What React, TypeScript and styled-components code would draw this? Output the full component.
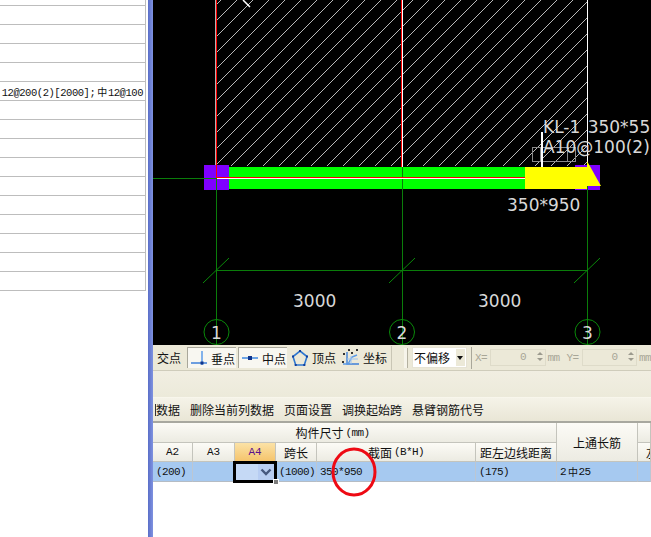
import React from "react";
import styled, { createGlobalStyle } from "styled-components";

const CJK = `"Noto Sans CJK SC", "Liberation Sans", sans-serif`;
const MONO = `"Liberation Mono", "Noto Sans CJK SC", monospace`;

const hatchLines = Array.from({ length: 40 }, (_, i) => 253 + (i - 2) * 16);

export default function App() {
  return (
    <Page>
      <GlobalStyle />
      <LeftPanel>
        {Array.from({ length: 16 }, (_, i) => (
          <LeftRow key={i} $short={i === 0}>
            {i === 5 && <RebarText>12@200(2)[2000];<Rebar>中</Rebar>12@100</RebarText>}
          </LeftRow>
        ))}
      </LeftPanel>
      <Splitter />
      <Main>
        <Canvas viewBox="153 0 498 345">
          <defs>
            <clipPath id="hatch">
              <rect x="217" y="0" width="370" height="166" />
            </clipPath>
          </defs>
          <g clipPath="url(#hatch)" stroke="#b8b8b8" strokeWidth="1" shapeRendering="crispEdges">
            {hatchLines.map((s) => (
              <line key={s} x1={s} y1="0" x2={s - 170} y2="170" />
            ))}
          </g>
          <line x1="243" y1="0" x2="250" y2="7" stroke="#fff" strokeWidth="1.5" />

          {/* axes */}
          <g shapeRendering="crispEdges">
            <rect x="204" y="165" width="25" height="25" fill="#7f00ff" />
            <rect x="575" y="165" width="25" height="25" fill="#7f00ff" />
            <rect x="229" y="167" width="296" height="22" fill="#00ff00" />
            <rect x="525" y="167" width="62" height="22" fill="#ffff00" />
            <rect x="153" y="178" width="63" height="1" fill="#0a7d0a" />
            <rect x="216" y="178" width="1" height="167" fill="#0a7d0a" />
            <rect x="402" y="167" width="1" height="178" fill="#0a7d0a" />
            <rect x="587" y="186" width="1" height="159" fill="#0a7d0a" />
            <rect x="216" y="270" width="372" height="1" fill="#0a7d0a" />
            <rect x="216" y="0" width="1" height="178" fill="#ff0000" />
            <rect x="215" y="0" width="1" height="165" fill="#ffffff" opacity="0.7" />
            <rect x="401" y="0" width="1" height="167" fill="#ff0000" />
            <rect x="402" y="0" width="1" height="167" fill="#ffffff" />
            <rect x="587" y="0" width="1" height="166" fill="#ffffff" />
            <rect x="216" y="177" width="309" height="1" fill="#ff0000" />
            <rect x="217" y="178" width="308" height="1" fill="#ffffff" />
          </g>
          <polygon points="587,161 601,186 587,186" fill="#ffff00" />

          {/* leader */}
          <g stroke="#8a8a8a" fill="none" shapeRendering="crispEdges">
            <rect x="532" y="147" width="43" height="14" />
            <line x1="540" y1="147" x2="540" y2="161" />
            <line x1="567" y1="147" x2="567" y2="161" />
          </g>
          <rect x="541" y="132" width="2" height="35" fill="#fff" />
          <CadText x="543" y="133" wordSpacing="2">KL-1 350*55</CadText>
          <CadText x="543" y="153">A10@100(2)</CadText>
          <CadText x="507" y="211">350*950</CadText>

          {/* dimension ticks */}
          <g stroke="#0a8a0a" strokeWidth="1">
            {[216, 402, 587].map((x) => (
              <line key={x} x1={x - 13} y1="283" x2={x + 13} y2="258" />
            ))}
          </g>
          <CadText x="293" y="307">3000</CadText>
          <CadText x="478" y="307">3000</CadText>

          {/* axis bubbles */}
          {[
            [216.5, "1"],
            [402, "2"],
            [587.5, "3"],
          ].map(([x, label]) => (
            <g key={label as string}>
              <circle cx={x as number} cy="332" r="12.5" fill="none" stroke="#0a8a0a" strokeWidth="1" />
              <CadText x={x as number} y="338.5" textAnchor="middle">
                {label}
              </CadText>
            </g>
          ))}
        </Canvas>

        <SnapBar>
          <SnapLabel>交点</SnapLabel>
          <ToolButton $active>
            <svg width="18" height="18" viewBox="0 0 18 18">
              <path d="M1 14h16" stroke="#3f80d8" strokeWidth="1.5" />
              <path d="M12 2v14" stroke="#5b9be8" strokeWidth="1.5" />
              <rect x="10.5" y="12.5" width="3" height="3" fill="#10358c" />
            </svg>
            垂点
          </ToolButton>
          <ToolButton $active>
            <svg width="18" height="18" viewBox="0 0 18 18">
              <path d="M1 9h16" stroke="#6ea5e6" strokeWidth="2" />
              <rect x="7" y="7" width="4" height="4" fill="#10358c" />
            </svg>
            中点
          </ToolButton>
          <ToolButton>
            <svg width="18" height="18" viewBox="0 0 18 18">
              <path d="M9 2l7 5.5-2.7 8.5H4.7L2 7.5z" fill="none" stroke="#2f78d0" strokeWidth="1.6" />
              <g fill="#123f9c">
                <rect x="8" y="1" width="2" height="2" />
                <rect x="1" y="6.5" width="2" height="2" />
                <rect x="15" y="6.5" width="2" height="2" />
                <rect x="3.7" y="15" width="2" height="2" />
                <rect x="12.3" y="15" width="2" height="2" />
              </g>
            </svg>
            顶点
          </ToolButton>
          <ToolButton>
            <svg width="18" height="18" viewBox="0 0 18 18">
              <path d="M5 3v12h12" fill="none" stroke="#3f80d8" strokeWidth="1.4" />
              <path d="M1 15h5l4-7 5-2" fill="none" stroke="#5b9be8" strokeWidth="1.4" />
              <path d="M9 7v8M5 10h11" stroke="#9cc2ef" strokeWidth="1" />
              <g fill="#333">
                <rect x="1" y="4" width="2" height="2" />
                <rect x="0" y="12" width="2" height="2" />
                <rect x="6" y="0" width="2" height="2" />
                <rect x="14" y="0" width="2" height="2" />
                <rect x="9" y="3" width="2" height="2" />
              </g>
            </svg>
            坐标
          </ToolButton>
          <GroupEnd />
          <Grip />
          <OffsetSelect>
            不偏移
            <SelectArrow />
          </OffsetSelect>
          <BarDivider />
          <CoordLabel $first>X=</CoordLabel>
          <CoordInput>
            0
            <Spinner>
              <i />
              <b />
            </Spinner>
          </CoordInput>
          <UnitLabel>mm</UnitLabel>
          <CoordLabel>Y=</CoordLabel>
          <CoordInput>
            0
            <Spinner>
              <i />
              <b />
            </Spinner>
          </CoordInput>
          <UnitLabel>mm</UnitLabel>
        </SnapBar>

        <BlankBar />

        <MenuBar>
          <MenuItem $clipped>数据</MenuItem>
          <MenuItem>删除当前列数据</MenuItem>
          <MenuItem>页面设置</MenuItem>
          <MenuItem>调换起始跨</MenuItem>
          <MenuItem>悬臂钢筋代号</MenuItem>
        </MenuBar>

        <Sheet>
          <HeadCell $col="1 / 7" $shift="44px">
            构件尺寸<Latin>(mm)</Latin>
          </HeadCell>
          <HeadCell $col="7" $row="1 / 3">
            上通长筋
          </HeadCell>
          <HeadCell $col="8" />
          <HeadCell $latin>A2</HeadCell>
          <HeadCell $latin>A3</HeadCell>
          <HeadCell $latin $selected>
            A4
          </HeadCell>
          <HeadCell>跨长</HeadCell>
          <HeadCell>
            截面<Latin>(B*H)</Latin>
          </HeadCell>
          <HeadCell>距左边线距离</HeadCell>
          <HeadCell $left>左</HeadCell>

          <DataCell>(200)</DataCell>
          <DataCell />
          <DataCell />
          <DataCell>(1000)</DataCell>
          <DataCell>350*950</DataCell>
          <DataCell>(175)</DataCell>
          <DataCell>
            2<Rebar>中</Rebar>25
          </DataCell>
          <DataCell />

          <ActiveCell>
            <DropButton>
              <svg width="12" height="8" viewBox="0 0 12 8">
                <path d="M1.5 1.5L6 6l4.5-4.5" fill="none" stroke="#45587f" strokeWidth="2.4" />
              </svg>
            </DropButton>
            <FillHandle />
          </ActiveCell>

          <CircleMark width="48" height="52" viewBox="0 0 48 52">
            <ellipse cx="24" cy="26" rx="21" ry="23" fill="none" stroke="#ee0a14" strokeWidth="3" />
          </CircleMark>
        </Sheet>
      </Main>
    </Page>
  );
}

//******** STYLES ********//
const GlobalStyle = createGlobalStyle`
  html, body {
    margin: 0;
    padding: 0;
    height: 100%;
    overflow: hidden;
    background: #fff;
  }
  #root {
    height: 100%;
  }
`;

const Page = styled.div`
  display: flex;
  width: 651px;
  height: 537px;
  overflow: hidden;
  font-family: ${CJK};
  font-size: 12px;
  color: #111;
  background: #fff;
`;

const LeftPanel = styled.div`
  flex: none;
  width: 145px;
  height: 291px;
  border-right: 1px solid #bdbdbd;
`;

const LeftRow = styled.div<{ $short?: boolean }>`
  display: flex;
  align-items: center;
  justify-content: flex-end;
  box-sizing: border-box;
  height: ${(p) => (p.$short ? "6px" : "19px")};
  padding-right: 2px;
  overflow: hidden;
  border-bottom: 1px solid #bdbdbd;
`;

const RebarText = styled.span`
  font-family: ${MONO};
  font-size: 10.5px;
  letter-spacing: -0.45px;
  white-space: nowrap;
`;

const Splitter = styled.div`
  flex: none;
  width: 5px;
  margin-left: 2px;
  background: linear-gradient(90deg, #5a6ec8, #7f92e0);
`;

const Main = styled.div`
  flex: none;
  display: flex;
  flex-direction: column;
  width: 498px;
  overflow: hidden;
`;

const Canvas = styled.svg`
  display: block;
  flex: none;
  width: 498px;
  height: 345px;
  background: #000;
`;

const CadText = styled.text`
  font-family: "DejaVu Sans", sans-serif;
  font-size: 17px;
  fill: #d8d8d8;
`;

const SnapBar = styled.div`
  flex: none;
  display: flex;
  align-items: center;
  box-sizing: border-box;
  height: 26px;
  padding-left: 4px;
  background: #ece9d8;
  border-bottom: 1px solid #cfccbb;
  white-space: nowrap;
`;

const SnapLabel = styled.span`
  width: 24px;
  margin-right: 6px;
`;

const ToolButton = styled.div<{ $active?: boolean }>`
  flex: none;
  display: flex;
  align-items: center;
  gap: 3px;
  box-sizing: border-box;
  width: 49px;
  height: 21px;
  margin-right: 2px;
  padding-left: 2px;
  background: ${(p) => (p.$active ? "#f8f7f1" : "transparent")};
  border-left: ${(p) => (p.$active ? "1px solid #a9a79a" : "0")};
  border-top: ${(p) => (p.$active ? "1px solid #a9a79a" : "0")};
`;

const GroupEnd = styled.div`
  width: 1px;
  height: 24px;
  background: #c9c6b5;
`;

const Grip = styled.div`
  width: 3px;
  height: 20px;
  margin-left: 12px;
  background: #f6f4ea;
  border-right: 1px solid #b4b1a0;
`;

const OffsetSelect = styled.div`
  position: relative;
  box-sizing: border-box;
  width: 56px;
  height: 21px;
  margin-left: 4px;
  padding-left: 1px;
  line-height: 19px;
  font-size: 12px;
  background: #fff;
  border: 1px solid #e6e3d4;
`;

const SelectArrow = styled.span`
  position: absolute;
  top: 1px;
  right: 1px;
  bottom: 1px;
  width: 9px;
  background: #ece9d8;
  &::after {
    content: "";
    position: absolute;
    top: 7px;
    left: 1px;
    border: 3px solid transparent;
    border-top: 4px solid #111;
    border-bottom: 0;
  }
`;

const BarDivider = styled.div`
  width: 1px;
  height: 22px;
  margin-left: 4px;
  background: #a9a79a;
`;

const CoordLabel = styled.span<{ $first?: boolean }>`
  width: 12px;
  margin-left: ${(p) => (p.$first ? "3px" : "7px")};
  font-family: ${MONO};
  font-size: 11px;
  letter-spacing: -0.6px;
  color: #a8a697;
`;

const CoordInput = styled.div`
  position: relative;
  box-sizing: border-box;
  width: 56px;
  height: 17px;
  margin-left: 3px;
  padding-right: 18px;
  line-height: 15px;
  text-align: right;
  font-family: ${MONO};
  font-size: 11px;
  color: #a8a697;
  border: 1px solid #dedbc9;
`;

const Spinner = styled.span`
  position: absolute;
  top: 2px;
  right: 2px;
  display: flex;
  flex-direction: column;
  gap: 3px;
  i,
  b {
    display: block;
    border: 3px solid transparent;
  }
  i {
    border-bottom: 3px solid #9b9a8e;
    border-top: 0;
  }
  b {
    border-top: 3px solid #9b9a8e;
    border-bottom: 0;
  }
`;

const UnitLabel = styled.span`
  width: 12px;
  margin-left: 2px;
  font-family: ${MONO};
  font-size: 11px;
  letter-spacing: -0.6px;
  color: #a8a697;
`;

const BlankBar = styled.div`
  flex: none;
  height: 26px;
  background: linear-gradient(#f1eee2, #eceada);
`;

const MenuBar = styled.div`
  flex: none;
  display: flex;
  align-items: center;
  gap: 10px;
  box-sizing: border-box;
  height: 26px;
  overflow: hidden;
  white-space: nowrap;
  border-top: 1px solid #f8f6ec;
  border-bottom: 2px solid #a8a89f;
  background: linear-gradient(#f5f3e8, #e9e6d6);
`;

const MenuItem = styled.span<{ $clipped?: boolean }>`
  flex: none;
  margin-left: ${(p) => (p.$clipped ? "2px" : "0")};
  border-left: ${(p) => (p.$clipped ? "1px solid #333" : "0")};
  font-size: 12px;
  line-height: 12px;
`;

const Sheet = styled.div`
  position: relative;
  flex: none;
  display: grid;
  grid-template-columns: 40px 42px 41px 41px 159px 81px 81px 1fr;
  grid-template-rows: 20px 19px 20px;
  white-space: nowrap;
`;

const HeadCell = styled.div<{
  $col?: string;
  $row?: string;
  $latin?: boolean;
  $selected?: boolean;
  $left?: boolean;
  $shift?: string;
}>`
  display: flex;
  align-items: center;
  justify-content: ${(p) => (p.$left ? "flex-start" : "center")};
  box-sizing: border-box;
  padding-left: ${(p) => (p.$left ? "8px" : "0")};
  padding-right: ${(p) => p.$shift ?? "0"};
  overflow: hidden;
  grid-column: ${(p) => p.$col ?? "auto"};
  grid-row: ${(p) => p.$row ?? "auto"};
  font-family: ${(p) => (p.$latin ? MONO : CJK)};
  font-size: ${(p) => (p.$latin ? "11px" : "12px")};
  color: ${(p) => (p.$selected ? "#5a108c" : "#111")};
  background: ${(p) =>
    p.$selected
      ? "linear-gradient(#fbe2a6, #f5c46c)"
      : "linear-gradient(#fcfbf6, #ecebe2)"};
  border-right: 1px solid #c4c4bc;
  border-bottom: 1px solid #c4c4bc;
`;

const Latin = styled.span`
  margin-left: 2px;
  font-family: ${MONO};
  font-size: 11px;
  letter-spacing: -0.6px;
`;

const DataCell = styled.div`
  display: flex;
  align-items: center;
  box-sizing: border-box;
  padding-left: 3px;
  overflow: hidden;
  font-family: ${MONO};
  font-size: 11px;
  letter-spacing: -0.6px;
  background: #a6c9f0;
  border-right: 1px solid #bcc6d2;
  border-bottom: 1px solid #b5bcc4;
`;

const Rebar = styled.span`
  margin: 0 1px 0 2px;
  font-family: ${CJK};
  font-size: 10px;
`;

const ActiveCell = styled.div`
  position: absolute;
  left: 80px;
  top: 38px;
  box-sizing: border-box;
  width: 44px;
  height: 22px;
  background: #c5d9f5;
  border: 3px solid #000;
`;

const DropButton = styled.div`
  position: absolute;
  top: 0;
  right: 0;
  bottom: 0;
  display: flex;
  align-items: center;
  justify-content: center;
  width: 16px;
  background: #b7cdf2;
`;

const FillHandle = styled.span`
  position: absolute;
  right: -5px;
  bottom: -5px;
  width: 4px;
  height: 4px;
  background: #7d7d7d;
  border: 1px solid #fff;
`;

const CircleMark = styled.svg`
  position: absolute;
  left: 177px;
  top: 23px;
`;
